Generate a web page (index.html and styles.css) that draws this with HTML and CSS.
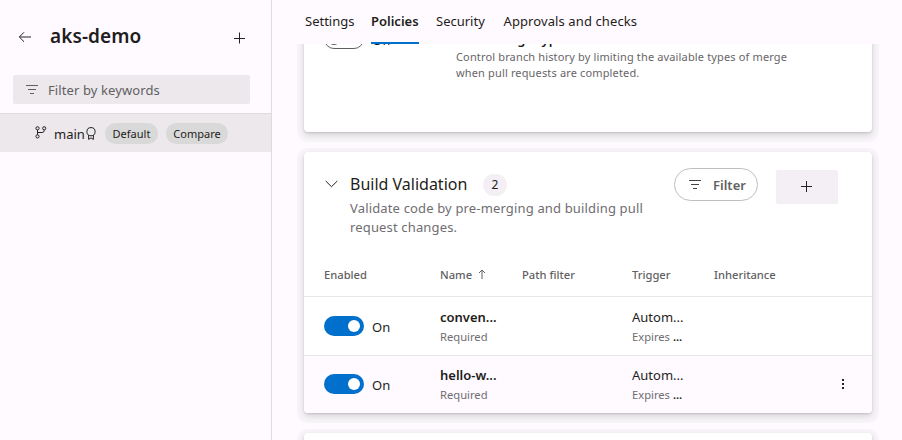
FILE: index.html
```html
<!DOCTYPE html>
<html lang="en">
<head>
<meta charset="utf-8">
<title>aks-demo - Policies</title>
<link rel="stylesheet" href="styles.css">
</head>
<body>
<aside class="sidebar">
  <header class="repo">
    <svg class="back" width="14" height="12" viewBox="0 0 14 12"><path d="M13 6H1.5M6 1.3L1.3 6 6 10.7"/></svg>
    <h1>aks-demo</h1>
    <svg class="plus" width="12" height="12" viewBox="0 0 12 12"><path d="M6.5 .5v11M1 6.5h11"/></svg>
  </header>
  <div class="search">
    <svg width="12" height="10" viewBox="0 0 12 10"><path d="M0 .5h12M2 4.5h8M4 8.5h4"/></svg>
    <span>Filter by keywords</span>
  </div>
  <div class="branch">
    <svg class="fork" width="12" height="13" viewBox="0 0 12 13"><circle cx="2.5" cy="2.3" r="1.6"/><circle cx="9.2" cy="2.3" r="1.6"/><circle cx="2.5" cy="10.4" r="1.6"/><path d="M2.5 3.9v4.9M9.2 3.9v.6q0 2-2 2H2.5"/></svg>
    <span class="branch-name">main</span>
    <svg class="ribbon" width="10" height="13" viewBox="0 0 10 13"><circle cx="5" cy="4.7" r="4.1"/><path d="M2.6 8.2v4.2L5 10.9l2.4 1.5V8.2"/></svg>
    <span class="pill pill-default">Default</span>
    <span class="pill">Compare</span>
  </div>
</aside>
<main>
  <nav>
    <a class="t1">Settings</a><a class="t2 active">Policies</a><a class="t3">Security</a><a class="t4">Approvals and checks</a>
  </nav>
  <div class="scroll">
    <section class="card merge">
      <div class="toggle off"><i></i></div>
      <span class="off-label">Off</span>
      <div class="merge-text">
        <h3>Limit merge types</h3>
        <p>Control branch history by limiting the available types of merge<br><span class="l2">when pull requests are completed.</span></p>
      </div>
    </section>
    <section class="card build">
      <div class="build-head">
        <svg class="chev" width="13" height="8" viewBox="0 0 13 8"><path d="M.7 1l5.8 5.7L12.3 1"/></svg>
        <div class="build-text">
          <h2><span>Build Validation</span><b>2</b></h2>
          <p>Validate code by pre-merging and building pull<br><span class="l2">request changes.</span></p>
        </div>
        <button class="filter"><svg width="12" height="10" viewBox="0 0 12 10"><path d="M0 .5h12M2 4.5h8M4 8.5h4"/></svg><span>Filter</span></button>
        <button class="add"><svg width="12" height="12" viewBox="0 0 12 12"><path d="M5.5 0v11M0 5.5h11"/></svg></button>
      </div>
      <div class="grid columns">
        <span class="c-enabled">Enabled</span><span><span class="c-name">Name</span><svg width="8" height="10" viewBox="0 0 8 10"><path d="M4 10V1M1 4l3-3 3 3"/></svg></span><span class="c-path">Path filter</span><span class="c-trigger">Trigger</span><span class="c-inherit">Inheritance</span>
      </div>
      <div class="grid policy">
        <div class="enabled"><div class="toggle"><i></i></div><span>On</span></div>
        <div><strong class="n1">conven...</strong><small class="req">Required</small></div>
        <div></div>
        <div><span class="auto">Autom...</span><small><span class="exp">Expires</span> <em>...</em></small></div>
        <div></div>
      </div>
      <div class="grid policy hovered">
        <div class="enabled"><div class="toggle"><i></i></div><span>On</span></div>
        <div><strong class="n2">hello-w...</strong><small class="req">Required</small></div>
        <div></div>
        <div><span class="auto">Autom...</span><small><span class="exp">Expires</span> <em>...</em></small></div>
        <div></div>
        <svg class="more" width="2" height="10" viewBox="0 0 2 10"><path d="M0 0h2v2h-2zM0 4h2v2h-2zM0 8h2v2h-2z"/></svg>
      </div>
    </section>
    <section class="card next"></section>
  </div>
</main>
</body>
</html>
```
FILE: styles.css
```css
* { box-sizing: border-box; }
body { margin: 0; width: 902px; height: 440px; overflow: hidden; display: flex; background: #fefaff; color: #1f1d20; font: 13px/20px "Noto Sans", "Open Sans", sans-serif; white-space: nowrap; }
h1, h2, h3, p { margin: 0; }
svg { display: block; flex: none; fill: none; stroke: #222; stroke-width: 1; }
.sidebar { width: 272px; flex: none; border-right: 1px solid #dedbdf; }
.repo { display: flex; height: 75px; padding: 0 26px 0 18px; }
.back { margin: 31px 18px 0 0; }
h1 { flex: 1; margin-top: 22px; font-size: 19px; line-height: 28px; font-weight: 600; letter-spacing: .08px; }
.plus { margin-top: 32px; }
.search { margin: 0 21px 0 13px; height: 29px; padding-left: 13px; display: flex; align-items: center; gap: 10px; background: #ece8ec; border-radius: 2px; color: #625f63; letter-spacing: .1px; }
.search svg { stroke: #625f63; }
.branch { margin-top: 9px; height: 39px; border-top: 1px solid #dedbdf; background: #ece8ec; display: flex; align-items: center; padding-left: 35px; }
.fork { margin-top: -1px; }
.branch-name { margin: 2px 2px 0 7px; width: 30px; }
.ribbon { margin: 0 9px 0 0; }
.pill { height: 21px; width: 62px; border-radius: 11px; background: #d9d9d9; font-size: 11px; line-height: 21px; text-align: center; }
.pill-default { width: 53px; margin-right: 8px; }
main { flex: 1; min-width: 0; display: flex; flex-direction: column; }
nav { height: 44px; flex: none; display: flex; gap: 17px; padding: 11px 0 0 33px; position: relative; z-index: 1; }
nav a { height: 33px; }
.t1 { width: 50px; }
.t3 { width: 50.5px; }
.t4 { letter-spacing: .1px; }
nav .active { width: 48px; font-weight: 600; border-bottom: 2px solid #0070cc; margin-left: -1px; }
.scroll { flex: 1; overflow: hidden; padding: 0 30px 0 32px; }
.card { background: #fff; border-radius: 4px; box-shadow: 0 3px 7px rgba(0,0,0,.14), 0 1px 2px rgba(0,0,0,.12), 0 3px 0 7px rgba(90,110,80,.035); }
.merge { height: 138px; margin: -50px 0 20px; padding: 35px 20px 0; display: flex; }
.toggle { width: 40px; height: 20px; border-radius: 10px; background: #0070cc; padding: 4px; display: flex; justify-content: flex-end; }
.toggle i { width: 12px; height: 12px; border-radius: 50%; background: #fff; }
.off { background: #fff; border: 1px solid #625f63; justify-content: flex-start; padding: 3px; }
.off i { background: #625f63; }
.off-label { width: 84px; margin: 1px 0 0 8px; }
h3 { font-size: 13px; line-height: 20px; font-weight: 600; }
.merge-text p { font-size: 11px; line-height: 16px; color: #686569; letter-spacing: .148px; }
.build { height: 261px; margin-bottom: 20px; }
.build-head { height: 101px; padding: 16px 34px 0 21px; display: flex; }
.chev { margin: 12px 12px 0 0; }
.build-text { width: 324px; }
h2 { display: flex; align-items: center; font-size: 16px; font-weight: 400; line-height: 32px; height: 31px; }
h2 span { width: 133px; }
h2 b { width: 24px; height: 22px; margin-top: 3px; border-radius: 11px; background: #f4eff5; font: 12px/22px "Noto Sans"; text-align: center; }
.build-text p { line-height: 19px; color: #706d71; letter-spacing: .155px; }
button { font: inherit; padding: 0; display: flex; align-items: center; }
.filter { width: 84px; height: 33px; border: 1px solid #bfbdc0; border-radius: 17px; background: #fff; padding-left: 14px; gap: 12px; color: #625f63; font-weight: 600; }
.filter svg { stroke: #444; }
.add { margin: 2px 0 0 18px; width: 62px; height: 34px; border: 0; border-radius: 2px; background: #f4eff5; justify-content: center; }
.grid { display: grid; grid-template-columns: 116px 82px 110px 82px 1fr; padding: 0 20px; position: relative; }
.grid.columns { height: 43px; padding-top: 12px; font-size: 11.2px; font-weight: 500; color: #625f63; line-height: 20px; }
.columns > span { display: flex; }
.columns svg { margin: 4px 0 0 6px; stroke: #625f63; }
.columns .c-name { width: 32px; }
.policy { height: 59px; border-top: 1px solid #e7e5e8; padding-top: 10px; }
.hovered { height: 58px; background: #fefaff; border-radius: 0 0 4px 4px; padding-top: 9px; }
.policy strong, .policy small, .auto { display: block; height: 20px; line-height: 20px; }
.policy strong { font-weight: 600; }
.policy small { font-size: 11.2px; color: #706d71; }
.policy small em { font-style: normal; font-weight: 600; color: #222; }
.enabled { display: flex; gap: 8px; padding-top: 9px; }
.enabled span { margin-top: 1px; }
.more { position: absolute; right: 28px; top: 23px; fill: #222; stroke: none; }
.next { height: 80px; }
```
